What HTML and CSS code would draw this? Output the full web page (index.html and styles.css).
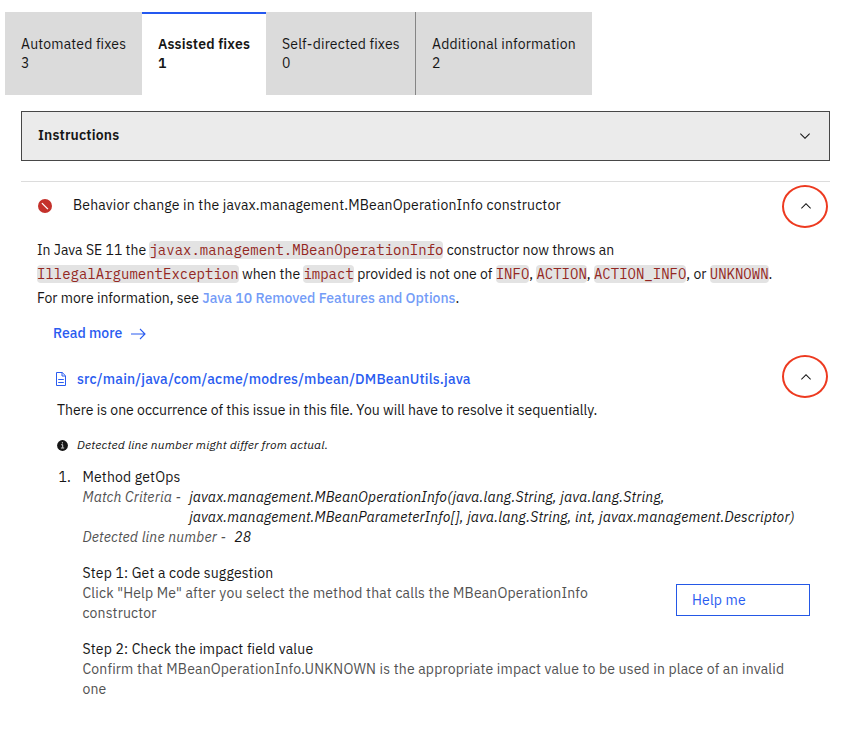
FILE: index.html
```
<!DOCTYPE html>
<html lang="en">
<head>
<meta charset="utf-8">
<title>Assisted fixes</title>
<link rel="stylesheet" href="styles.css">
</head>
<body>
<nav class="tabs">
  <div class="tab tab-automated"><span>Automated fixes</span><span>3</span></div>
  <div class="tab tab-active"><span>Assisted fixes</span><span>1</span></div>
  <div class="tab tab-self"><span>Self-directed fixes</span><span>0</span></div>
  <div class="tab tab-info"><span>Additional information</span><span>2</span></div>
</nav>
<main class="panel">
  <div class="instructions">
    <span>Instructions</span>
    <svg class="chevron" viewBox="0 0 16 16"><path d="M8 11 3 6l.7-.7L8 9.6l4.3-4.3.7.7z"/></svg>
  </div>
  <section class="issue">
    <header class="issue-head">
      <svg class="severity" viewBox="0 0 14 14"><circle cx="7" cy="7" r="7" fill="#c4312b"/><path d="M3.9 4.1l6 6" stroke="#fff" stroke-width="1.3"/></svg>
      <h2 class="issue-title">Behavior change in the javax.management.MBeanOperationInfo constructor</h2>
      <button class="ring"><svg class="chevron" viewBox="0 0 16 16"><path d="M8 5l5 5-.7.7L8 6.4l-4.3 4.3L3 10z"/></svg></button>
    </header>
    <div class="description">
      <div>In Java SE 11 the <code>javax.management.MBeanOperationInfo</code> constructor now throws an</div>
      <div><code>IllegalArgumentException</code> when the <code>impact</code> provided is not one of <code>INFO</code>, <code>ACTION</code>, <code>ACTION_INFO</code>, or <code>UNKNOWN</code>.</div>
      <div>For more information, see <a class="doc-link">Java 10 Removed Features and Options</a>.</div>
    </div>
    <a class="read-more"><span>Read more</span>
      <svg class="arrow" viewBox="0 0 15 12"><path d="M0 6h14M9 1l5 5-5 5" fill="none" stroke="#2a5cf0" stroke-width="1.1"/></svg>
    </a>
    <div class="file">
      <svg class="file-icon" viewBox="0 0 10 14"><path d="M.5.5h5.7l3.3 3.3v9.7h-9zM6 .5V4h3.5M2.2 7.5h5.6M2.2 10.5h5.6" fill="none" stroke="#2a5cf0"/></svg>
      <a class="file-link">src/main/java/com/acme/modres/mbean/DMBeanUtils.java</a>
      <button class="ring"><svg class="chevron" viewBox="0 0 16 16"><path d="M8 5l5 5-.7.7L8 6.4l-4.3 4.3L3 10z"/></svg></button>
    </div>
    <p class="occurrence">There is one occurrence of this issue in this file. You will have to resolve it sequentially.</p>
    <div class="notice">
      <svg class="info" viewBox="0 0 11 11"><circle cx="5.5" cy="5.5" r="5.4" fill="#161616"/><path d="M4.2 4.7h1.5v3M3.9 8h3.3" fill="none" stroke="#fff" stroke-width=".8"/><circle cx="5.4" cy="2.8" r=".65" fill="#fff"/></svg>
      <span>Detected line number might differ from actual.</span>
    </div>
    <div class="method">
      <span class="number">1.</span>
      <div class="method-body">
        <div>Method getOps</div>
        <div class="detail">
          <span class="label">Match Criteria -</span>
          <div>
            <div>javax.management.MBeanOperationInfo(java.lang.String, java.lang.String,</div>
            <div>javax.management.MBeanParameterInfo[], java.lang.String, int, javax.management.Descriptor)</div>
          </div>
        </div>
        <div class="detail"><span class="label">Detected line number -</span><span>28</span></div>
        <div class="step">
          <div>
            <div>Step 1: Get a code suggestion</div>
            <div class="hint hint-narrow">Click "Help Me" after you select the method that calls the MBeanOperationInfo constructor</div>
          </div>
          <button class="help">Help me</button>
        </div>
        <div class="step">
          <div>
            <div>Step 2: Check the impact field value</div>
            <div class="hint hint-wide">Confirm that MBeanOperationInfo.UNKNOWN is the appropriate impact value to be used in place of an invalid one</div>
          </div>
        </div>
      </div>
    </div>
  </section>
</main>
</body>
</html>
```
FILE: styles.css
```
* { box-sizing: border-box; }
body {
  margin: 0;
  padding: 12px 15px 0 5px;
  background: #fff;
  color: #161616;
  font: 14px/20px "IBM Plex Sans", Roboto, sans-serif;
  letter-spacing: .16px;
}
h2, p { margin: 0; font: inherit; }
button { background: none; font: inherit; letter-spacing: inherit; color: inherit; padding: 0; }
svg { display: block; flex: none; }

.tabs { display: flex; height: 83px; }
.tab {
  display: flex;
  flex-direction: column;
  padding: 23px 0 0 16px;
  line-height: 19px;
  background: #dbdbdb;
  white-space: nowrap;
}
.tab-automated { width: 137px; }
.tab-active {
  width: 124px;
  padding-top: 21px;
  border-top: 2px solid #2458f0;
  background: #fff;
  font-weight: 600;
}
.tab-self { width: 149px; }
.tab-info { width: 177px; border-left: 1px solid #858585; }

.panel { padding: 16px 0 0 16px; }
.instructions {
  display: flex;
  align-items: center;
  justify-content: space-between;
  height: 50px;
  padding: 0 16px;
  border: 1px solid #474747;
  background: #ebebeb;
  font-weight: 600;
}
.instructions span { margin-top: -2px; }
.chevron { width: 16px; height: 16px; fill: #161616; }

.issue { margin-top: 20px; border-top: 1px solid #dcdcdc; }
.issue-head { display: flex; align-items: center; height: 49px; padding: 0 2px 0 17px; }
.severity { width: 14px; height: 14px; margin-top: -1px; }
.issue-title { margin: -3px 0 0 21px; white-space: nowrap; }
.ring {
  display: flex;
  align-items: center;
  justify-content: center;
  width: 46px;
  height: 43px;
  margin-left: auto;
  padding-left: 2px;
  border: 2px solid #ed3a20;
  border-radius: 50%;
}
.issue-head .chevron { margin-top: -1px; }

.description { margin-top: 7px; padding-left: 16px; line-height: 24px; letter-spacing: 0; white-space: nowrap; }
code {
  padding: 0;
  border-radius: 4px;
  background: #e3e3e3;
  color: #942722;
  font: 14px/18px "IBM Plex Mono", "Liberation Mono", monospace;
}
.doc-link { color: #749cf7; font-weight: 500; }

.read-more { display: flex; align-items: center; gap: 9px; margin: 13px 0 0 32px; color: #2a5cf0; font-weight: 500; letter-spacing: 0; }
.arrow { width: 15px; height: 12px; margin-top: 2px; }

.file { display: flex; align-items: center; height: 43px; margin-top: 12px; padding: 0 2px 0 35px; }
.file-icon { width: 10px; height: 14px; margin-top: 4px; }
.file-link { margin: 4px 0 0 11px; color: #2a5cf0; font-weight: 500; }
.occurrence { margin: 2px 0 0 36px; letter-spacing: 0; }
.notice { display: flex; align-items: center; gap: 9px; margin: 15px 0 0 36px; font-size: 12px; font-style: italic; }
.info { width: 11px; height: 11px; }

.method { display: flex; margin: 12px 0 0 37.5px; }
.number { width: 24px; }
.method-body { flex: 1; }
.detail { display: flex; gap: 8px; font-style: italic; white-space: nowrap; }
.label, .hint { color: #525252; }
.step { display: flex; justify-content: space-between; align-items: flex-start; margin-top: 16px; padding-right: 20px; }
.hint-narrow { width: 520px; }
.hint-wide { width: 710px; }
.help {
  width: 134px;
  height: 32px;
  margin-top: 21px;
  padding-left: 15px;
  border: 1px solid #2458e6;
  color: #2a5cf0;
  text-align: left;
}
```
